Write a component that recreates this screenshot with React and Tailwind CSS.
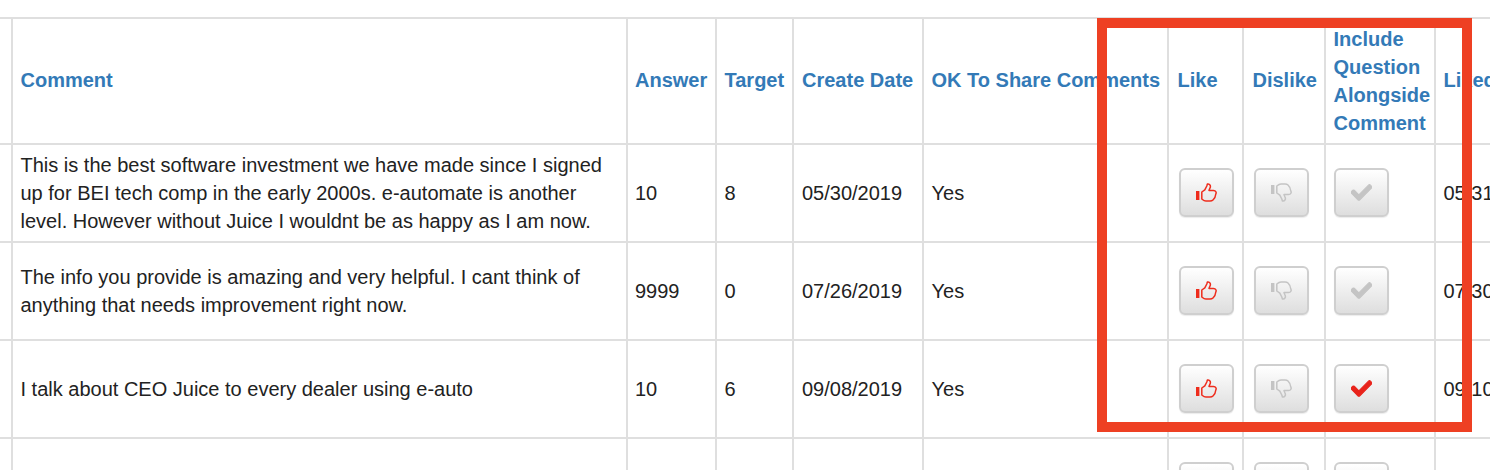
import React from "react";
import { FaCheck } from "react-icons/fa";

const th = "border-2 border-[#dfdfdf] pr-[6px] py-0 text-left align-middle font-bold text-[#337ab7] text-[20px] leading-[28px]";
const td = "border-2 border-[#dfdfdf] pr-[6px] py-0 align-middle text-[#222] text-[20px] leading-[28px]";

function Thumb({ down, color }) {
  return (
    <svg width="21" height="19" viewBox="0 0 21 19" className={down ? "-scale-y-100" : ""} fill="none">
      <rect x="0" y="8" width="3.4" height="9" fill={color} />
      <path
        d="M5.8 9 L8.8 6.8 L10.8 3 L11.4 1 C14 0.4 15 3 14 5 L13 7.4 L17.5 7.4 C20 7.4 20.6 9.8 19.8 11 C19.6 13.5 18.6 15.5 17 17 C16 17.9 15 18 14 18 L10 18 C8 18 7 17 5.8 16 Z"
        stroke={color}
        strokeWidth="1.5"
        strokeLinejoin="round"
      />
    </svg>
  );
}

function Btn({ children, className }) {
  return (
    <div className={"-mt-px flex h-[49px] w-[55px] items-center justify-center rounded-[6px] border-2 border-[#cfcfcf] bg-gradient-to-b from-white to-[#dedede] shadow-[0_1px_1px_rgba(0,0,0,0.08)] " + className}>
      {children}
    </div>
  );
}

const rows = [
  {
    c: "This is the best software investment we have made since I signed up for BEI tech comp in the early 2000s. e-automate is another level. However without Juice I wouldnt be as happy as I am now.",
    a: "10", t: "8", d: "05/30/2019", l: "05/31/2019", inc: false,
  },
  {
    c: "The info you provide is amazing and very helpful. I cant think of anything that needs improvement right now.",
    a: "9999", t: "0", d: "07/26/2019", l: "07/30/2019", inc: false,
  },
  {
    c: "I talk about CEO Juice to every dealer using e-auto",
    a: "10", t: "6", d: "09/08/2019", l: "09/10/2019", inc: true,
  },
];

function Row({ r }) {
  const check = r.inc ? "#e8231b" : "#c4c4c4";
  return (
    <tr className="h-[98px]">
      <td className="border-2 border-l-0 border-[#dfdfdf]"></td>
      <td className={td + " pl-[7.5px]"}>{r.c}</td>
      <td className={td + " pl-[7px]"}>{r.a}</td>
      <td className={td + " pl-[7.5px]"}>{r.t}</td>
      <td className={td + " pl-[8px]"}>{r.d}</td>
      <td className={td + " pl-[7.5px]"}>Yes</td>
      <td className={td + " pl-[7.5px]"}><Btn className="ml-[2.5px]"><Thumb color="#ee2c1c" /></Btn></td>
      <td className={td + " pl-[7.5px]"}><Btn className="ml-[2.5px]"><Thumb down color="#c4c4c4" /></Btn></td>
      <td className={td + " pl-[7.5px]"}>
        <Btn className="ml-[0.5px]"><FaCheck size={21} color={check} stroke={check} strokeWidth={25} /></Btn>
      </td>
      <td className={td + " pl-[7.5px] whitespace-nowrap"}>{r.l}</td>
    </tr>
  );
}

export default function App() {
  return (
    <div className="relative h-[470px] w-[1490px] overflow-hidden bg-white font-['Liberation_Sans',Arial,sans-serif]">
      <div className="pt-[17px]">
        <table className="w-[1600px] table-fixed border-collapse">
          <colgroup>
            <col className="w-[12px]" />
            <col className="w-[615px]" />
            <col className="w-[89px]" />
            <col className="w-[77px]" />
            <col className="w-[130px]" />
            <col className="w-[245px]" />
            <col className="w-[75px]" />
            <col className="w-[82px]" />
            <col className="w-[110px]" />
            <col className="w-[165px]" />
          </colgroup>
          <thead>
            <tr className="h-[126px]">
              <th className="border-2 border-l-0 border-[#dfdfdf]"></th>
              <th className={th + " pl-[7.5px] pb-[2px]"}>Comment</th>
              <th className={th + " pl-[7px] pb-[2px]"}>Answer</th>
              <th className={th + " pl-[7.5px] pb-[2px]"}>Target</th>
              <th className={th + " pl-[8px] pb-[2px] whitespace-nowrap"}>Create Date</th>
              <th className={th + " pl-[7.5px] pb-[2px] whitespace-nowrap"}>OK To Share Comments</th>
              <th className={th + " pl-[8.5px] pb-[2px]"}>Like</th>
              <th className={th + " pl-[8.5px] pb-[2px]"}>Dislike</th>
              <th className={th + " pl-[7.5px]"}>Include Question Alongside Comment</th>
              <th className={th + " pl-[7.5px] pb-[2px] whitespace-nowrap"}>Liked Date</th>
            </tr>
          </thead>
          <tbody>
            {rows.map((r) => <Row key={r.a + r.t} r={r} />)}
            <Row r={{ c: "", a: "", t: "", d: "", l: "", inc: false }} />
          </tbody>
        </table>
      </div>
      <div className="absolute left-[1097px] top-[18px] h-[414px] w-[375px] border-[10px] border-[#ee4023]"></div>
    </div>
  );
}
